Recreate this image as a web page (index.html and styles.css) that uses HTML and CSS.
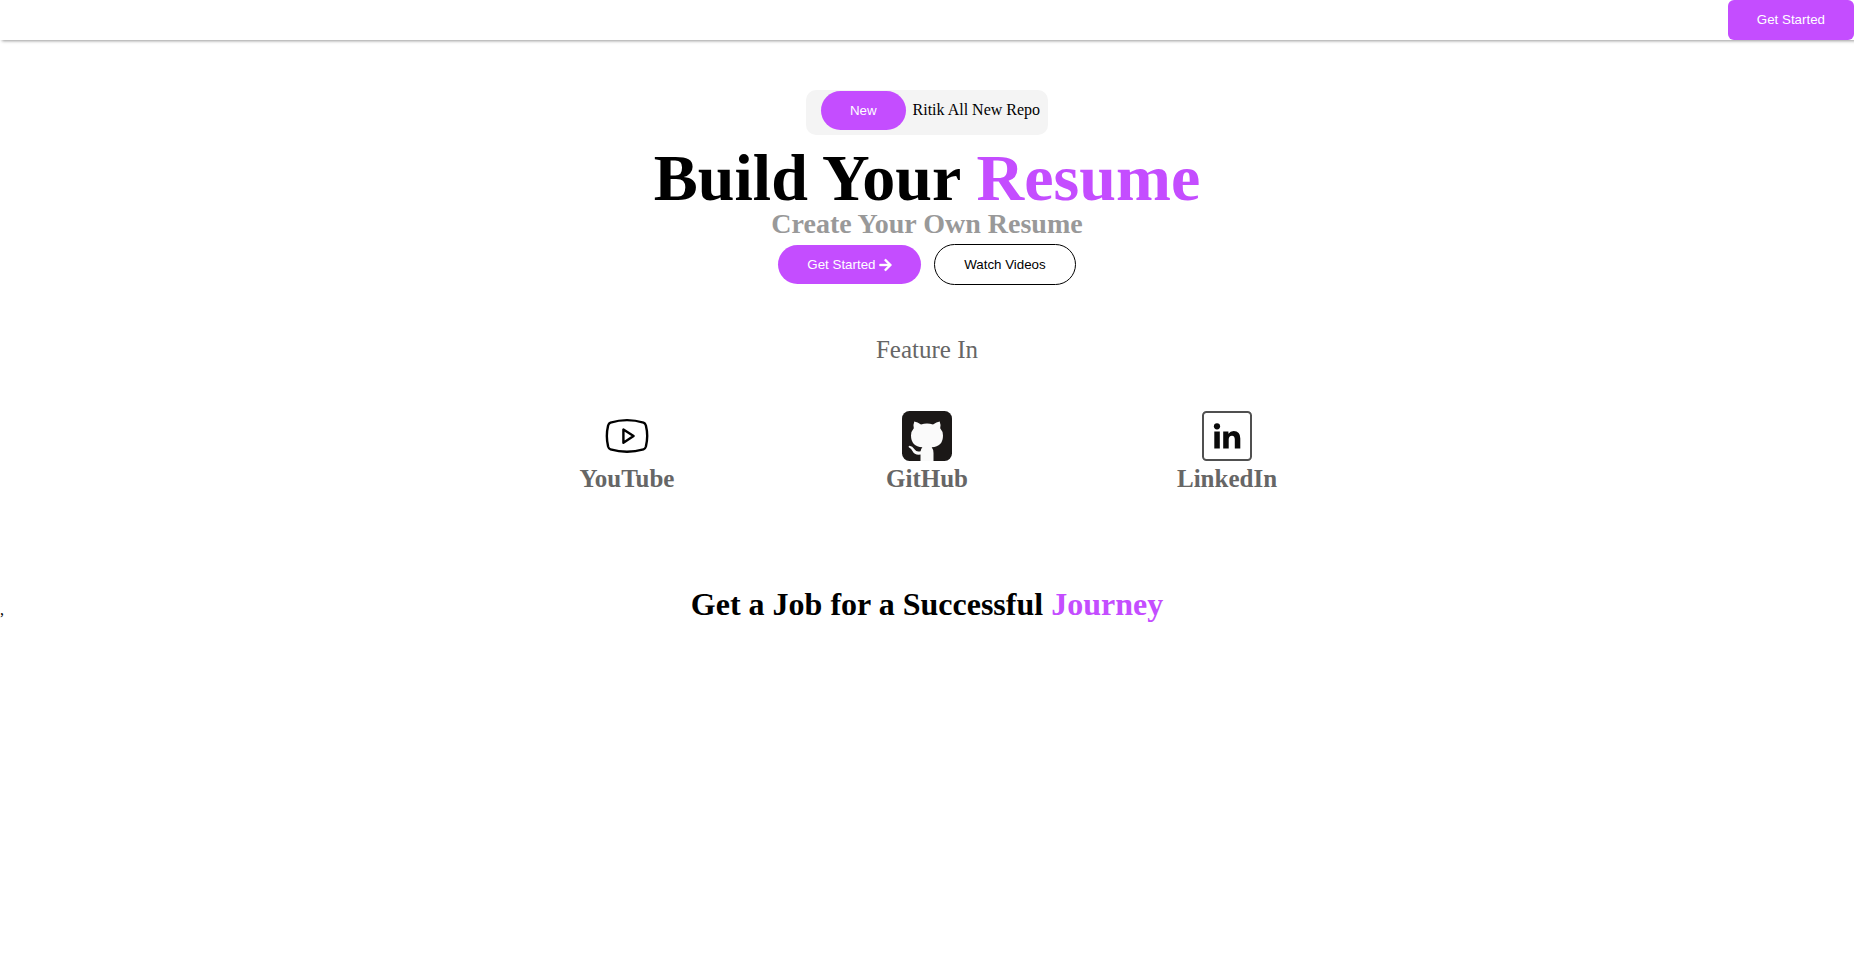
FILE: index.html
```html
<!DOCTYPE html>
<html lang="en">
<head>
<meta charset="utf-8">
<title>Resume Builder</title>
<link rel="stylesheet" href="styles.css">
</head>
<body>
<header class="header">
  <button class="btn btn-header" type="button">Get Started</button>
</header>
<main>
  <section class="hero">
    <div class="news">
      <button class="btn btn-round" type="button">New</button>
      <span>Ritik All New Repo</span>
    </div>
    <h1 class="title">Build Your <span class="accent">Resume</span></h1>
    <h2 class="subtitle">Create Your Own Resume</h2>
    <div class="actions">
      <button class="btn btn-round" type="button">Get Started
        <svg class="arrow" viewBox="0 0 448 512" aria-hidden="true"><path fill="currentColor" stroke="currentColor" stroke-width="12" d="M190.5 66.9l22.2-22.2c9.4-9.4 24.6-9.4 33.9 0L441 239c9.4 9.4 9.4 24.6 0 33.9L246.600 467.300c-9.400 9.400-24.600 9.400-33.900 0l-22.200-22.200c-9.500-9.500-9.300-25 .4-34.300L311.400 296H24c-13.300 0-24-10.700-24-24v-32c0-13.300 10.700-24 24-24h287.400L190.900 101.200c-9.800-9.300-10-24.800-.4-34.300z"/></svg>
      </button>
      <button class="btn btn-round btn-outline" type="button">Watch Videos</button>
    </div>
  </section>
  <section class="features">
    <p class="features-title">Feature In</p>
    <ul class="feature-list">
      <li class="feature">
        <svg class="logo" viewBox="0 0 50 50" aria-hidden="true"><g fill="none" stroke="#000" stroke-width="2.400" stroke-linejoin="round"><path d="M8.500 11.700Q25 6.600 41.500 11.700Q43.200 12.300 43.900 14.500Q46.500 25 43.900 35.500Q43.200 37.900 41.500 38.400Q25 43.200 8.500 38.400Q6.800 37.900 6.100 35.500Q3.600 25 6.100 14.500Q6.800 12.300 8.500 11.700Z"/><path d="M21.400 18.600V31.700L31.600 25Z"/></g></svg>
        <h3>YouTube</h3>
      </li>
      <li class="feature">
        <svg class="logo" viewBox="0 0 50 50" aria-hidden="true"><rect width="50" height="50" rx="7.500" fill="#1b1817"/><path fill="#fafafa" d="M12.300 10.500Q15.500 11 19 13.400Q25 11.800 31 13.400Q34.500 11 37.700 10.500Q39 13.500 38.200 17.200Q41 20.300 41 24.500Q41 35.700 29.700 36.300Q31.500 38.500 31.500 42V50H18.500V43.500Q12.500 44.300 10.600 40.300Q9.500 37.500 6.800 36.200Q6 34.900 7.600 34.800Q10.400 35 12.500 38.300Q14.600 41.500 18.600 40.200Q18.900 37.800 20.400 36.300Q9 35.500 9 24.500Q9 20.300 11.800 17.200Q11 13.500 12.300 10.500Z"/></svg>
        <h3>GitHub</h3>
      </li>
      <li class="feature">
        <svg class="logo" viewBox="0 0 50 50" aria-hidden="true"><rect x="1" y="1" width="48" height="48" rx="3.500" fill="#fff" stroke="#505050" stroke-width="2"/><g fill="#0a0a0a"><circle cx="15" cy="15.300" r="3.100"/><path d="M12.300 20.500h5.500v17h-5.500zM21.200 20.500h5.200v2.300q1.900-2.800 5.300-2.800 6.600 0 6.600 7.500v10h-5.500v-9q0-3.800-2.800-3.800-3.300 0-3.300 3.800v9h-5.500z"/></g></svg>
        <h3>LinkedIn</h3>
      </li>
    </ul>
  </section>
  <section class="journey">
    <span>,</span>
    <h2 class="journey-title">Get a Job for a Successful <span class="accent">Journey</span></h2>
  </section>
</main>
</body>
</html>
```

FILE: styles.css
```css
* {
  margin: 0;
  padding: 0;
  box-sizing: border-box;
}

body {
  background: #fff;
  color: #000;
  font-family: "Liberation Serif", "Times New Roman", serif;
  font-size: 16px;
}

.accent {
  color: #c44dff;
}

.header {
  display: flex;
  justify-content: flex-end;
  height: 40px;
  box-shadow: 2px 1px 3px rgba(0, 0, 0, 0.4);
}

.btn {
  padding: 12px 29px;
  border: none;
  border-radius: 6px;
  background: #c44dff;
  color: #fff;
  font-family: "Liberation Sans", Arial, sans-serif;
  cursor: pointer;
}

.btn-header {
  padding-bottom: 13px;
}

.btn-round {
  border-radius: 20px;
}

.btn-outline {
  border: 1px solid #000;
  border-radius: 21px;
  background: #fff;
  color: #000;
}

.hero {
  display: flex;
  flex-direction: column;
  align-items: center;
  padding-top: 50px;
}

.news {
  display: flex;
  align-items: baseline;
  gap: 7px;
  padding: 1px 8px 5px 15px;
  border-radius: 10px;
  background: #f4f4f4;
}

.title {
  margin-top: 12px;
  font-size: 66px;
  line-height: 62px;
}

.subtitle {
  color: #999;
  font-size: 28px;
  line-height: 30px;
}

.actions {
  display: flex;
  align-items: center;
  gap: 13px;
  margin-top: 5px;
}

.arrow {
  width: 13px;
  height: 14px;
  vertical-align: -3px;
}

.features {
  margin-top: 50px;
  color: #666;
  text-align: center;
}

.features-title {
  font-size: 25px;
  line-height: 30px;
}

.feature-list {
  display: flex;
  justify-content: center;
  margin-top: 46px;
  list-style: none;
}

.feature {
  width: 300px;
}

.feature h3 {
  font-size: 25px;
  line-height: 36px;
}

.logo {
  display: block;
  width: 50px;
  height: 50px;
  margin: 0 auto;
}

.journey {
  display: grid;
  grid-template-columns: 1fr auto 1fr;
  align-items: baseline;
  margin-top: 88px;
}

.journey-title {
  font-size: 32px;
  line-height: 38px;
}
```
